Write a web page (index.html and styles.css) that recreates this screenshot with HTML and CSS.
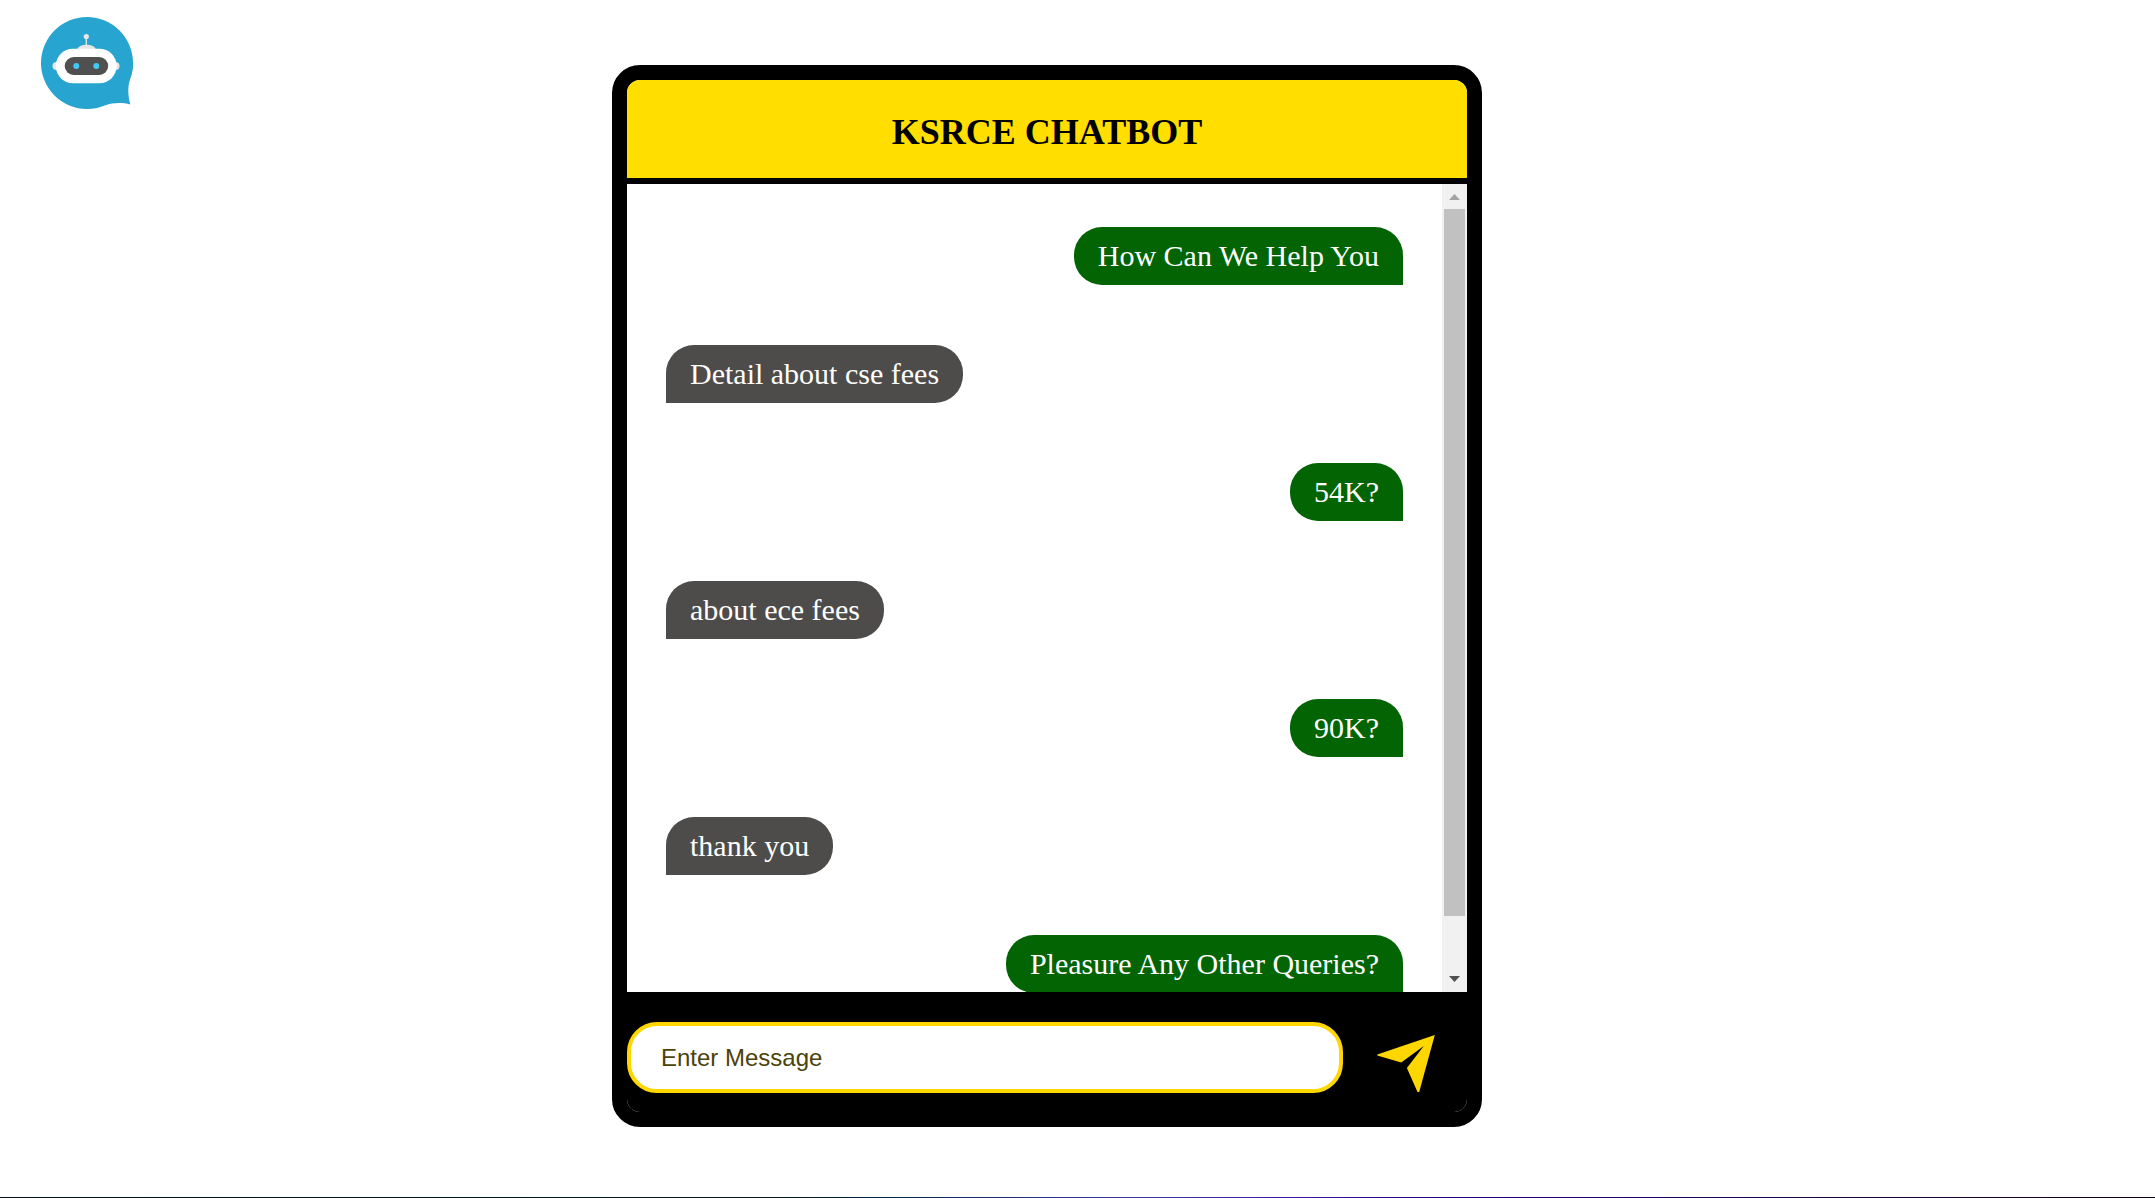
FILE: index.html
```
<!DOCTYPE html>
<html lang="en">
<head>
<meta charset="utf-8">
<meta name="viewport" content="width=device-width, initial-scale=1">
<title>KSRCE Chatbot</title>
<link rel="stylesheet" href="styles.css">
</head>
<body>
<div class="page">
  <aside class="brand">
    <svg class="brand-logo" viewBox="0 0 92 92" role="img" aria-label="Chatbot">
      <circle cx="46" cy="46" r="46" fill="#27a4d0"/>
      <path fill="#27a4d0" d="M92 46c0 6-1 10-3 16-2.500 8-2 17 .300 25.500-8-2-17-2-25.300.800L46 46z"/>
      <circle cx="15.500" cy="49" r="4" fill="#e6e6e6"/>
      <circle cx="74.500" cy="49" r="4" fill="#e6e6e6"/>
      <path d="M36 33c1-7 18-7 19 0z" fill="#e6e6e6"/>
      <path d="M45.300 20v10" stroke="#e6e6e6" stroke-width="1.300"/>
      <circle cx="45.300" cy="19.500" r="2.600" fill="#e6e6e6"/>
      <rect x="14.700" y="31.700" width="61" height="34.600" rx="17.300" fill="#fff"/>
      <rect x="23.700" y="40" width="43.500" height="18" rx="9" fill="#505050"/>
      <circle cx="35.300" cy="49" r="3" fill="#43c8f5"/>
      <circle cx="55.300" cy="49" r="3" fill="#43c8f5"/>
    </svg>
  </aside>
  <main class="chat">
    <header class="chat-header"><h1 class="chat-title">KSRCE CHATBOT</h1></header>
    <div class="chat-body">
      <div class="messages" tabindex="0" aria-label="Messages">
        <p class="bubble bubble-bot">How Can We Help You</p>
        <p class="bubble bubble-user">Detail about cse fees</p>
        <p class="bubble bubble-bot">54K?</p>
        <p class="bubble bubble-user">about ece fees</p>
        <p class="bubble bubble-bot">90K?</p>
        <p class="bubble bubble-user">thank you</p>
        <p class="bubble bubble-bot">Pleasure Any Other Queries?</p>
      </div>
      <div class="scrollbar" aria-hidden="true">
        <svg class="scroll-arrow" viewBox="0 0 25 25"><path fill="#a3a3a3" d="M7 16 12.500 10 18 16z"/></svg>
        <div class="scroll-track"><div class="scroll-thumb"></div></div>
        <svg class="scroll-arrow" viewBox="0 0 25 25"><path fill="#505050" d="M7 9h11l-5.500 6z"/></svg>
      </div>
    </div>
    <form class="composer">
      <input class="composer-input" type="text" placeholder="Enter Message" aria-label="Enter Message">
      <button class="composer-send" type="button" aria-label="Send">
        <svg class="send-icon" viewBox="0 0 58 58" aria-hidden="true">
          <path fill="#ffd700" d="M.300 19.500 57.800 0 42.200 57H40.500L29.900 33 46.800 11 24.200 27.500.300 20.500z"/>
        </svg>
      </button>
    </form>
  </main>
</div>
</body>
</html>
```
FILE: styles.css
```
* { box-sizing: border-box; }

body {
  margin: 0;
  background: #fff;
  font-family: "Liberation Serif", "Times New Roman", serif;
}

.page {
  display: grid;
  grid-template-columns: 1fr minmax(0, 870px) 1fr;
  min-height: 100vh;
  padding-right: 61px;
  align-items: start;
  background:
    linear-gradient(90deg, #001014 0%, #001818 36%, #002850 41%, #3c3c96 53%, #3c14a0 60%, #2c0078 67%, #0a0014 100%)
    bottom / 100% 1px no-repeat;
}

.brand { padding: 17px 0 0 41px; }

.brand-logo {
  display: block;
  width: 92px;
  height: 92px;
}

.chat {
  display: flex;
  flex-direction: column;
  margin: 65px 0;
  border: 15px solid #000;
  border-radius: 28px;
  background: #fff;
  overflow: hidden;
}

.chat-header {
  padding: 31px 24px 25px;
  background: #ffde00;
  border-bottom: 6px solid #000;
}

.chat-title {
  margin: 0;
  color: #000;
  font-size: 36px;
  line-height: 42px;
  text-align: center;
}

.chat-body {
  display: flex;
  height: calc(100vh - 390px);
}

.messages {
  display: flex;
  flex: 1;
  flex-direction: column;
  gap: 60px;
  padding: 43px 39px 57px;
  overflow-y: auto;
  scrollbar-width: none;
}

.bubble {
  flex: none;
  margin: 0;
  padding: 12px 24px;
  color: #fff;
  font-size: 30px;
  line-height: 34px;
}

.bubble-bot {
  align-self: flex-end;
  border-radius: 28px 28px 0 28px;
  background: #036403;
}

.bubble-user {
  align-self: flex-start;
  border-radius: 28px 28px 28px 0;
  background: #4e4c4a;
}

.scrollbar {
  display: flex;
  flex-direction: column;
  width: 25px;
  background: #f1f1f1;
}

.scroll-arrow {
  display: block;
  flex: none;
  width: 25px;
  height: 25px;
}

.scroll-track {
  flex: 1;
  padding: 0 2px;
}

.scroll-thumb {
  height: calc(100% - 51px);
  background: #c1c1c1;
}

.composer {
  display: flex;
  align-items: flex-start;
  gap: 34px;
  height: 120px;
  padding: 30px 32px 0 0;
  background: #000;
}

.composer-input {
  flex: 1;
  min-width: 0;
  height: 71px;
  padding: 0 30px;
  border: 4px solid #ffd700;
  border-radius: 30px;
  background: #fff;
  color: #4b430a;
  font-family: "Liberation Sans", Arial, sans-serif;
  font-size: 24px;
}

.composer-input::placeholder {
  color: #4b430a;
  opacity: 1;
}

.composer-send {
  padding: 13px 0 0;
  border: 0;
  background: none;
  cursor: pointer;
}

.send-icon {
  display: block;
  width: 58px;
  height: 58px;
}
```
